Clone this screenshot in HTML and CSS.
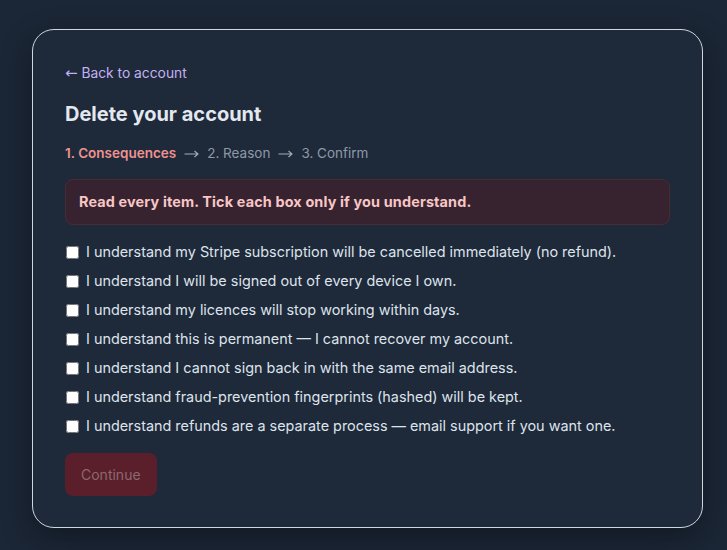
FILE: index.html
```html
<!DOCTYPE html>
<html lang="en">
<head>
  <meta charset="UTF-8" />
  <meta name="viewport" content="width=device-width, initial-scale=1.0"/>
  <title>Delete your account</title>
  <link rel="stylesheet" href="styles.css">
</head>
<body>

  <div class="card">
    <a class="back-link" href="#"><span class="arrow">&larr;</span> Back to account</a>
    <h1>Delete your account</h1>

    <div class="steps">
      <span class="step current">1. Consequences</span>
      <svg class="step-arrow" width="15" height="10" viewBox="0 0 15 10"><path d="M0.5 5H14M10.5 2L14 5L10.5 8" fill="none" stroke="currentColor" stroke-width="1.1"/></svg>
      <span class="step">2. Reason</span>
      <svg class="step-arrow" width="15" height="10" viewBox="0 0 15 10"><path d="M0.5 5H14M10.5 2L14 5L10.5 8" fill="none" stroke="currentColor" stroke-width="1.1"/></svg>
      <span class="step">3. Confirm</span>
    </div>

    <div class="warning">Read every item. Tick each box only if you understand.</div>

    <ul class="checklist">
      <li><label><input type="checkbox"> I understand my Stripe subscription will be cancelled immediately (no refund).</label></li>
      <li><label><input type="checkbox"> I understand I will be signed out of every device I own.</label></li>
      <li><label><input type="checkbox"> I understand my licences will stop working within days.</label></li>
      <li><label><input type="checkbox"> I understand this is permanent — I cannot recover my account.</label></li>
      <li><label><input type="checkbox"> I understand I cannot sign back in with the same email address.</label></li>
      <li><label><input type="checkbox"> I understand fraud-prevention fingerprints (hashed) will be kept.</label></li>
      <li><label><input type="checkbox"> I understand refunds are a separate process — email support if you want one.</label></li>
    </ul>

    <button class="continue" disabled>Continue</button>
  </div>

</body>
</html>
```

FILE: styles.css
```css
* {
  box-sizing: border-box;
}

body {
  margin: 0;
  padding: 29px 24px 0 32px;
  font-family: 'Inter', 'Liberation Sans', sans-serif;
  background: #1b2636;
  min-height: 100vh;
}

.card {
  width: 671px;
  height: 499px;
  background: #1e293a;
  border: 1px solid #cfd6e0;
  border-radius: 22px;
  padding: 33px 32px 0 32px;
  box-shadow: 0 10px 30px rgba(0, 0, 0, 0.35);
}

.arrow {
  font-family: 'DejaVu Sans', sans-serif;
  font-weight: 400;
}

.back-link {
  display: block;
  color: #c3b1f2;
  font-size: 13.8px;
  line-height: 20px;
  text-decoration: none;
}

.back-link .arrow {
  font-size: 15px;
}

h1 {
  margin: 19px 0 0 0;
  color: #e3e8ef;
  font-size: 20px;
  line-height: 24px;
  font-weight: 700;
}

.steps {
  display: flex;
  align-items: center;
  gap: 8px;
  margin-top: 17px;
  font-size: 13.5px;
  line-height: 20px;
  color: #8e99a8;
}

.step.current {
  color: #f0938f;
  font-weight: 600;
}

.step-arrow {
  color: #a3adba;
  margin-top: 1px;
}

.warning {
  margin-top: 16px;
  padding: 12px 13px;
  background: #37232f;
  border: 1px solid #4a2a35;
  border-radius: 8px;
  color: #f8c6c6;
  font-size: 14.4px;
  letter-spacing: 0.15px;
  font-weight: 700;
  line-height: 20px;
}

.checklist {
  list-style: none;
  margin: 17px 0 0 0;
  padding: 0;
}

.checklist li {
  height: 29px;
}

.checklist label {
  display: flex;
  align-items: center;
  gap: 7px;
  color: #dde3ea;
  font-size: 14.4px;
  line-height: 20px;
  cursor: pointer;
}

.checklist input {
  width: 13px;
  height: 13px;
  margin: 0 0 0 1px;
}

.continue {
  margin-top: 8px;
  padding: 0 16px;
  height: 43px;
  background: #5a1f2b;
  color: #8c6870;
  border: none;
  border-radius: 8px;
  font-family: inherit;
  font-size: 14px;
}
```
